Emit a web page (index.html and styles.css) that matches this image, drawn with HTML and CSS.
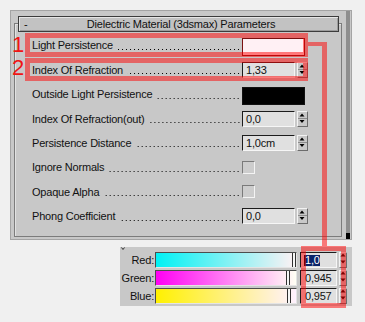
FILE: index.html
```html
<!DOCTYPE html>
<html>
<head>
<meta charset="utf-8">
<link rel="stylesheet" href="styles.css">
</head>
<body>
<div class="stage">

  <div class="panel">
    <div class="rollouts">
      <div class="rollout">
        <div class="rollTitle">
          <span class="minus">-</span>
          <span class="titleText">Dielectric Material (3dsmax) Parameters</span>
          <span></span>
        </div>
        <div class="params">
          <div class="prow">
            <span class="lbl">Light Persistence</span><span class="dots"></span>
            <span class="ctl"><span class="swatch pink"></span></span>
          </div>
          <div class="prow">
            <span class="lbl">Index Of Refraction</span><span class="dots"></span>
            <span class="ctl"><span class="edit">1,33</span><span class="arr"><svg width="9" height="14" viewBox="0 0 9 14"><polygon points="1.5,4.5 6.5,4.5 4,1.5" fill="#000"/><polygon points="1.5,8 6.5,8 4,11" fill="#000"/><line x1="0" y1="6.5" x2="9" y2="6.5" stroke="#8c8c8c"/></svg></span></span>
          </div>
          <div class="prow">
            <span class="lbl">Outside Light Persistence</span><span class="dots"></span>
            <span class="ctl"><span class="swatch black"></span></span>
          </div>
          <div class="prow">
            <span class="lbl">Index Of Refraction(out)</span><span class="dots"></span>
            <span class="ctl"><span class="edit">0,0</span><span class="arr"><svg width="9" height="14" viewBox="0 0 9 14"><polygon points="1.5,4.5 6.5,4.5 4,1.5" fill="#000"/><polygon points="1.5,8 6.5,8 4,11" fill="#000"/><line x1="0" y1="6.5" x2="9" y2="6.5" stroke="#8c8c8c"/></svg></span></span>
          </div>
          <div class="prow">
            <span class="lbl">Persistence Distance</span><span class="dots"></span>
            <span class="ctl"><span class="edit">1,0cm</span><span class="arr"><svg width="9" height="14" viewBox="0 0 9 14"><polygon points="1.5,4.5 6.5,4.5 4,1.5" fill="#000"/><polygon points="1.5,8 6.5,8 4,11" fill="#000"/><line x1="0" y1="6.5" x2="9" y2="6.5" stroke="#8c8c8c"/></svg></span></span>
          </div>
          <div class="prow">
            <span class="lbl">Ignore Normals</span><span class="dots"></span>
            <span class="ctl"><span class="check"></span></span>
          </div>
          <div class="prow">
            <span class="lbl">Opaque Alpha</span><span class="dots"></span>
            <span class="ctl"><span class="check"></span></span>
          </div>
          <div class="prow">
            <span class="lbl">Phong Coefficient</span><span class="dots"></span>
            <span class="ctl"><span class="edit">0,0</span><span class="arr"><svg width="9" height="14" viewBox="0 0 9 14"><polygon points="1.5,4.5 6.5,4.5 4,1.5" fill="#000"/><polygon points="1.5,8 6.5,8 4,11" fill="#000"/><line x1="0" y1="6.5" x2="9" y2="6.5" stroke="#8c8c8c"/></svg></span></span>
          </div>
        </div>
      </div>
    </div>
    <div class="vscroll"><div class="track"></div><div class="thumb"></div></div>
  </div>

  <div class="colorBox">
    <svg class="caret" width="4" height="3" viewBox="0 0 4 3"><polyline points="0.5,0.5 2,2.5 3.5,0.5" fill="none" stroke="#333" stroke-width="1"/></svg>
    <div class="crows">
      <div class="crow">
        <span class="clbl">Red:</span>
        <span class="bar redBar"><span class="handle" style="left:136px"></span></span>
        <span class="cedit"><span class="sel">1,0</span></span>
        <span class="carr"><svg width="6" height="14" viewBox="0 0 6 14"><polygon points="0.5,3.5 5.5,3.5 3,0.5" fill="#000"/><polygon points="0.5,7.5 5.5,7.5 3,10.5" fill="#000"/></svg></span>
      </div>
      <div class="crow">
        <span class="clbl">Green:</span>
        <span class="bar greenBar"><span class="handle" style="left:130px"></span></span>
        <span class="cedit">0,945</span>
        <span class="carr"><svg width="6" height="14" viewBox="0 0 6 14"><polygon points="0.5,3.5 5.5,3.5 3,0.5" fill="#000"/><polygon points="0.5,7.5 5.5,7.5 3,10.5" fill="#000"/></svg></span>
      </div>
      <div class="crow">
        <span class="clbl">Blue:</span>
        <span class="bar blueBar"><span class="handle" style="left:131px"></span></span>
        <span class="cedit">0,957</span>
        <span class="carr"><svg width="6" height="14" viewBox="0 0 6 14"><polygon points="0.5,3.5 5.5,3.5 3,0.5" fill="#000"/><polygon points="0.5,7.5 5.5,7.5 3,10.5" fill="#000"/></svg></span>
      </div>
    </div>
  </div>

  <!-- red annotation marks over the screenshot -->
  <div class="num n1">1</div>
  <div class="num n2">2</div>
  <div class="mark m1"></div>
  <div class="mark m2"></div>
  <div class="mark m3"></div>
  <div class="link linkH"></div>
  <div class="link linkV"></div>

</div>
</body>
</html>
```

FILE: styles.css
```css
body {
    margin: 0;
    background: #f0f0f0;
    font-family: "Liberation Sans", Arial, sans-serif;
    font-size: 11px;
    letter-spacing: -0.2px;
    color: #111;
}

.stage {
    position: relative;
    width: 365px;
    height: 322px;
    box-sizing: border-box;
    padding: 10px 0 0 10px;
    overflow: hidden;
}

/* main rollout panel */
.panel {
    display: flex;
    width: 342px;
    height: 230px;
    box-sizing: border-box;
    background: #c8c8c8;
    border: 1px solid #a4a4a4;
}
.rollouts {
    flex: 1;
    display: flex;
    padding: 12px 1px 2px 3px;
}
.rollout {
    flex: 1;
    border: 1px solid #7c7c7c;
    box-shadow: inset 1px 1px 0 #e2e2e2;
}
.rollTitle {
    display: grid;
    grid-template-columns: 1fr auto 1fr;
    align-items: center;
    height: 16px;
    box-sizing: border-box;
    margin: -8px 2px 0 3px;
    padding-left: 5px;
    border: 1px solid #3c3c3c;
    background: #c2c2c2;
    box-shadow: inset 1px 1px 0 #e6e6e6, inset -1px -1px 0 #9c9c9c;
    line-height: 14px;
}
.minus { justify-self: start; }

.params {
    padding: 1px 33px 0 17px;
}
.prow {
    display: flex;
    align-items: center;
    height: 24.45px;
}
.lbl { white-space: nowrap; }
.dots {
    flex: 1;
    height: 1px;
    margin: 8px 2px 0 4px;
    background: linear-gradient(90deg, transparent 2px, #000 2px, #000 3px, transparent 3px) right top / 4px 1px repeat-x;
}
.ctl {
    display: flex;
    align-items: center;
    width: 66px;
    height: 18px;
}

.swatch {
    width: 63px;
    height: 18px;
    box-sizing: border-box;
    margin-top: 4px;
}
.pink { background: #fff0f4; border: 1px solid #7a1010; }
.black { background: #000; border: 1px solid #111; }

.edit {
    width: 53px;
    height: 16px;
    box-sizing: border-box;
    padding-left: 3px;
    background: #e0e0e0;
    border: 1px solid;
    border-color: #1c1c1c #f6f6f6 #f6f6f6 #1c1c1c;
    line-height: 14px;
}
.arr {
    display: flex;
    width: 11px;
    height: 16px;
    box-sizing: border-box;
    margin-left: 2px;
    background: #c8c8c8;
    border: 1px solid;
    border-color: #f2f2f2 #6c6c6c #6c6c6c #f2f2f2;
}

.check {
    width: 13px;
    height: 13px;
    box-sizing: border-box;
    background: #cdcdcd;
    border: 1px solid;
    border-color: #7a7a7a #f4f4f4 #f4f4f4 #7a7a7a;
}

.vscroll {
    display: flex;
    flex-direction: column;
    width: 8px;
    padding-left: 3px;
    box-sizing: border-box;
}
.track { flex: 1; width: 4px; background: #8e8e8e; }
.thumb { height: 6px; width: 4px; background: #000; }

/* colour picker strip */
.colorBox {
    width: 232px;
    height: 59px;
    box-sizing: border-box;
    margin: 7px 0 0 110px;
    background: #c8c8c8;
}
.caret { display: block; margin-left: 1px; }
.crows {
    display: flex;
    flex-direction: column;
    gap: 2px;
    margin-top: 2px;
}
.crow {
    display: flex;
    align-items: center;
    height: 16px;
}
.clbl { width: 34px; text-align: right; }
.bar {
    position: relative;
    width: 142px;
    height: 16px;
    box-sizing: border-box;
    margin-left: 1px;
    border: 1px solid;
    border-color: #4c4c4c #e4e4e4 #e4e4e4 #4c4c4c;
}
.redBar { background: linear-gradient(90deg, rgb(0,241,244), rgb(255,241,244)); }
.greenBar { background: linear-gradient(90deg, rgb(255,0,244), rgb(255,255,244)); }
.blueBar { background: linear-gradient(90deg, rgb(255,241,0), rgb(255,241,255)); }
.handle {
    position: absolute;
    top: 0;
    bottom: 0;
    width: 4px;
    box-sizing: border-box;
    border-left: 1px solid #303030;
    border-right: 1px solid #303030;
    background: #f6f6f6;
}
.cedit {
    width: 37px;
    height: 16px;
    box-sizing: border-box;
    margin-left: 3px;
    padding-left: 4px;
    background: #e0e0e0;
    border: 1px solid;
    border-color: #1c1c1c #f6f6f6 #f6f6f6 #1c1c1c;
    line-height: 14px;
}
.sel {
    display: inline-block;
    height: 11px;
    line-height: 11px;
    background: #0a246a;
    color: #fff;
    border-left: 1px solid #000;
    margin-left: -1px;
}
.carr {
    display: flex;
    width: 8px;
    height: 16px;
    box-sizing: border-box;
    margin-left: 2px;
    background: #c8c8c8;
    border: 1px solid;
    border-color: #f2f2f2 #6c6c6c #6c6c6c #f2f2f2;
}

/* annotations */
.num {
    position: absolute;
    left: 12px;
    font-size: 22px;
    line-height: 22px;
    letter-spacing: 0;
    color: #f01414;
}
.n1 { top: 34px; }
.n2 { top: 57px; }
.mark {
    position: absolute;
    box-sizing: border-box;
    border: 5px solid rgba(255, 0, 0, 0.5);
}
.m1 { left: 25px; top: 33px; width: 283px; height: 24px; }
.m2 { left: 25px; top: 58px; width: 283px; height: 23px; }
.m3 { left: 301px; top: 246px; width: 45px; height: 62px; }
.link {
    position: absolute;
    background: rgba(255, 0, 0, 0.5);
}
.linkH { left: 308px; top: 42px; width: 14px; height: 4px; }
.linkV { left: 322px; top: 42px; width: 5px; height: 204px; }
```
